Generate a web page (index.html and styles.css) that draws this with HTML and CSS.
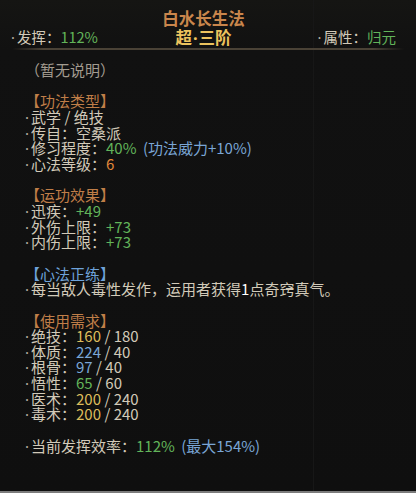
FILE: index.html
```html
<!DOCTYPE html>
<html lang="zh">
<head>
    <meta charset="UTF-8">
    <title>白水长生法</title>
    <link rel="stylesheet" href="styles.css">
</head>
<body>
    <div class="panel">
        <div class="header">
            <div class="stat stat-left"><span class="dot">·</span>发挥：<span class="green">112%</span></div>
            <div class="title-block">
                <div class="title">白水长生法</div>
                <div class="grade">超<span class="mid">·</span>三阶</div>
            </div>
            <div class="stat stat-right"><span class="dot">·</span>属性：<span class="green">归元</span></div>
        </div>
        <div class="divider"></div>

        <div class="content">
            <div class="line muted">（暂无说明）</div>
            <div class="gap"></div>

            <div class="line head">【功法类型】</div>
            <div class="line"><span class="dot">·</span>武学 / 绝技</div>
            <div class="line"><span class="dot">·</span>传自：空桑派</div>
            <div class="line"><span class="dot">·</span>修习程度：<span class="green">40%</span> <span class="blue note">(功法威力+10%)</span></div>
            <div class="line"><span class="dot">·</span>心法等级：<span class="orange">6</span></div>
            <div class="gap"></div>

            <div class="line head">【运功效果】</div>
            <div class="line"><span class="dot">·</span>迅疾：<span class="green">+49</span></div>
            <div class="line"><span class="dot">·</span>外伤上限：<span class="green">+73</span></div>
            <div class="line"><span class="dot">·</span>内伤上限：<span class="green">+73</span></div>
            <div class="gap"></div>

            <div class="line head-blue">【心法正练】</div>
            <div class="line"><span class="dot">·</span>每当敌人毒性发作，运用者获得<span class="white">1</span>点奇窍真气。</div>
            <div class="gap"></div>

            <div class="line head">【使用需求】</div>
            <div class="line"><span class="dot">·</span>绝技：<span class="yellow">160</span> / 180</div>
            <div class="line"><span class="dot">·</span>体质：<span class="blue">224</span> / 40</div>
            <div class="line"><span class="dot">·</span>根骨：<span class="blue">97</span> / 40</div>
            <div class="line"><span class="dot">·</span>悟性：<span class="green">65</span> / 60</div>
            <div class="line"><span class="dot">·</span>医术：<span class="yellow">200</span> / 240</div>
            <div class="line"><span class="dot">·</span>毒术：<span class="yellow">200</span> / 240</div>
            <div class="gap"></div>

            <div class="line"><span class="dot">·</span>当前发挥效率：<span class="green">112%</span> <span class="blue note">(最大154%)</span></div>
        </div>
    </div>
</body>
</html>
```

FILE: styles.css
```css
body {
    margin: 0;
    width: 416px;
    height: 493px;
    overflow: hidden;
    background: #101010;
    font-family: "Noto Sans CJK SC", "Noto Sans", sans-serif;
    color: #d2cab9;
}

.panel {
    height: 491px;
    border-bottom: 2px solid #7c7c7c;
    /* faint frame line behind the tooltip */
    background:
        linear-gradient(to right, transparent 313px, #171717 313px, #171717 314px, transparent 314px),
        linear-gradient(to bottom, #151513 0, #111111 50px, #0f0f0f 100%);
}

.header {
    display: grid;
    grid-template-columns: 1fr auto 1fr;
    align-items: end;
    padding: 9px 20px 0 11px;
}

.title-block {
    text-align: center;
    font-weight: bold;
    font-size: 16.5px;
    line-height: 19px;
}

.title {
    color: #c9864c;
}

.grade {
    color: #ecc35e;
}

.mid {
    font-family: "Noto Sans", sans-serif;
    margin: 0 1px;
}

.stat {
    font-size: 14.5px;
    line-height: 19px;
}

.stat-right {
    justify-self: end;
}

.dot {
    font-family: "Noto Sans", sans-serif;
    color: #b8b0a2;
    margin-right: 2px;
}

.divider {
    height: 2px;
    margin: 1px 12px 0;
    background: linear-gradient(to right, rgba(80, 70, 58, 0), #4a4236 8%, #4a4236 92%, rgba(80, 70, 58, 0));
}

.content {
    padding: 12px 0 0 25px;
    font-size: 15px;
}

.line {
    height: 15.67px;
    line-height: 15.67px;
    white-space: nowrap;
}

.content .dot {
    margin-right: 2px;
}

.note {
    margin-left: 3px;
}

.gap {
    height: 15.67px;
}

.muted {
    color: #a39c90;
}

.head {
    color: #c07e48;
}

.head-blue {
    color: #6ea2da;
}

.green {
    color: #62b45a;
}

.blue {
    color: #7aa6d6;
}

.orange {
    color: #e0883a;
}

.yellow {
    color: #dcbc5c;
}

.white {
    color: #ffffff;
}
```
